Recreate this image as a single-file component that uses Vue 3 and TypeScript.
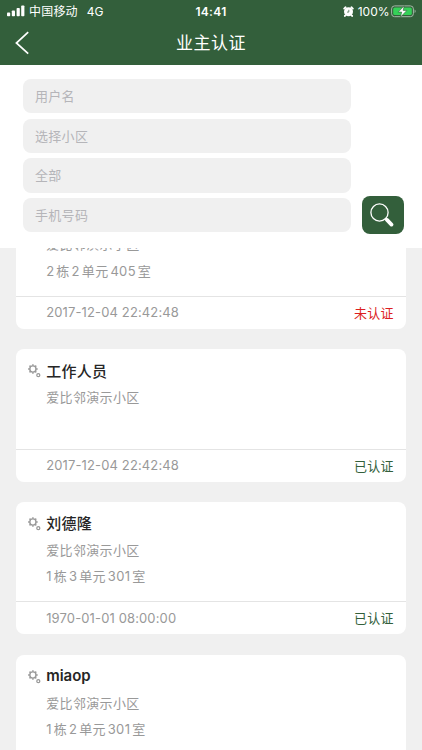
<script setup lang="ts">
interface Owner {
  name: string
  estate: string
  room: string[]
  time?: string
  verified?: boolean
}

const fields: string[] = ['用户名', '选择小区', '全部', '手机号码']

const owners: Owner[] = [
  { name: '', estate: '爱比邻演示小区', room: ['2', '栋', '2', '单元', '405', '室'], time: '2017-12-04 22:42:48', verified: false },
  { name: '工作人员', estate: '爱比邻演示小区', room: [], time: '2017-12-04 22:42:48', verified: true },
  { name: '刘德隆', estate: '爱比邻演示小区', room: ['1', '栋', '3', '单元', '301', '室'], time: '1970-01-01 08:00:00', verified: true },
  { name: 'miaop', estate: '爱比邻演示小区', room: ['1', '栋', '2', '单元', '301', '室'] },
]

const isLatin = (text: string): boolean => /^[\x20-\x7e]+$/.test(text)
</script>

<template>
  <div class="screen">
    <header class="header">
      <div class="status">
        <div class="side">
          <svg class="signal" width="18" height="12" viewBox="0 0 18 12">
            <rect x="0" y="7.6" width="3.2" height="3.6" rx=".8" />
            <rect x="4.8" y="5.4" width="3.2" height="5.8" rx=".8" />
            <rect x="9.6" y="3" width="3.2" height="8.2" rx=".8" />
            <rect x="14.2" y="0.4" width="3.2" height="10.8" rx=".8" />
          </svg>
          <span class="carrier">中国移动</span>
          <span class="net">4G</span>
        </div>
        <div class="clock">14:41</div>
        <div class="side end">
          <svg class="alarm" width="11" height="11" viewBox="0 0 11 11">
            <circle cx="5.5" cy="5.8" r="4.5" fill="#fff" />
            <path d="M1.2 2.6 2.6 1.3M9.8 2.6 8.4 1.3M2.2 9.5l-.3.4M8.8 9.5l.3.4" stroke="#fff" stroke-width="1.9" stroke-linecap="round" />
            <path d="M5.8 3.8v2.3H4" fill="none" stroke="#335f3b" stroke-width=".7" />
          </svg>
          <span class="percent">100%</span>
          <svg class="battery" width="26" height="13" viewBox="0 0 26 13">
            <rect x=".6" y=".9" width="21.8" height="10.8" rx="3" fill="none" stroke="#a5b9a8" stroke-width="1" />
            <rect x="2.2" y="2.5" width="18.6" height="7.6" rx="1.6" fill="#35d158" />
            <path d="M23.6 4.6c1.4.5 1.4 2.9 0 3.4z" fill="#a5b9a8" />
            <path d="M13.2.8 7.2 7.1h3.5l-1.2 5L15.9 5.4h-3.7z" fill="#fff" stroke="#335f3b" stroke-width=".6" />
          </svg>
        </div>
      </div>
      <div class="nav">
        <svg class="back" width="15" height="24" viewBox="0 0 15 24">
          <path d="M13.2 1.2 1.4 12l11.8 10.6" fill="none" stroke="#fff" stroke-width="1.7" />
        </svg>
        <h1 class="title">业主认证</h1>
      </div>
    </header>

    <section class="search">
      <div class="fields">
        <div v-for="field in fields" :key="field" class="field">{{ field }}</div>
      </div>
      <button class="go" type="button" aria-label="搜索">
        <svg width="24" height="24" viewBox="0 0 24 24">
          <circle cx="9.5" cy="9.5" r="8.6" fill="none" stroke="#fff" stroke-width="1.3" />
          <path d="m15.6 15.5 1.5 1.5" stroke="#fff" stroke-width="2" />
          <path d="m17 16.9 4.5 4.7" stroke="#fff" stroke-width="3.7" stroke-linecap="round" />
        </svg>
      </button>
    </section>

    <main class="list">
      <article v-for="(owner, i) in owners" :key="i" class="card">
        <div class="info">
          <div class="name">
            <svg class="gears" width="13" height="14" viewBox="0 0 13 14">
              <g fill="none" stroke="#999">
                <circle cx="4.9" cy="5" r="3.1" stroke-width="1.4" />
                <path d="M4.9 .2v1.6M4.9 8.2v1.6M.1 5h1.6M8.1 5h1.6M1.5 1.6l1.2 1.2M7.1 7.2l1.2 1.2M8.3 1.6 7.1 2.8M2.7 7.2 1.5 8.4" stroke-width="1.5" />
                <circle cx="10.3" cy="11.2" r="1.5" stroke-width="1.3" />
              </g>
            </svg>
            <span :class="{ latin: isLatin(owner.name) }">{{ owner.name }}</span>
          </div>
          <div class="line">{{ owner.estate }}</div>
          <div class="line room">
            <span v-for="(part, k) in owner.room" :key="k">{{ part }}</span>
          </div>
        </div>
        <footer v-if="owner.time" class="foot">
          <time class="time">{{ owner.time }}</time>
          <span class="state" :class="{ pending: !owner.verified }">{{ owner.verified ? '已认证' : '未认证' }}</span>
        </footer>
      </article>
    </main>
  </div>
</template>

<style>
body {
  overflow: hidden;
}
</style>

<style scoped>
.screen {
  display: flex;
  flex-direction: column;
  width: 422px;
  height: 750px;
  overflow: hidden;
  background: #f0f0f0;
  font-family: Inter, "Noto Sans CJK SC", sans-serif;
}
.header {
  flex: none;
  height: 65px;
  background: #335f3b;
  color: #fff;
}
.status {
  display: grid;
  grid-template-columns: 1fr auto 1fr;
  height: 22px;
  padding: 0 5px 0 7px;
  font-size: 12px;
  line-height: 23px;
}
.side {
  display: flex;
  align-items: center;
  height: 22px;
}
.end {
  justify-content: flex-end;
}
.signal {
  fill: #fff;
  margin-right: 4px;
}
.carrier {
  letter-spacing: 0.2px;
}
.net {
  margin-left: 9px;
}
.clock {
  font-weight: 600;
  letter-spacing: 0.3px;
  transform: translateX(-1px);
}
.alarm {
  margin-right: 4px;
}
.percent {
  margin-right: 1.5px;
}
.nav {
  display: grid;
  grid-template-columns: 1fr auto 1fr;
  align-items: center;
  height: 42px;
  padding: 0 15px;
}
.title {
  margin: 0;
  font-size: 17px;
  font-weight: 400;
  line-height: 42px;
  letter-spacing: 0.5px;
}
.search {
  position: relative;
  z-index: 1;
  flex: none;
  box-sizing: border-box;
  display: flex;
  align-items: flex-end;
  gap: 10.5px;
  height: 182.5px;
  padding: 14px 18.5px 13.5px 23px;
  background: #fff;
}
.fields {
  flex: 1;
  display: flex;
  flex-direction: column;
  gap: 5.4px;
  align-self: flex-start;
}
.field {
  height: 34.3px;
  padding-left: 12px;
  border-radius: 8px;
  background: #f0f0f0;
  color: #b5b5b9;
  font-size: 13px;
  line-height: 34px;
  letter-spacing: 0.3px;
}
.go {
  display: flex;
  align-items: center;
  justify-content: center;
  width: 42px;
  height: 38px;
  padding: 0 1px 0 0;
  border: 0;
  border-radius: 8px;
  background: #335f3b;
}
.list {
  display: flex;
  flex-direction: column;
  gap: 20.3px;
  margin-top: -51.4px;
  padding: 0 15.7px;
}
.card {
  flex: none;
  display: flex;
  flex-direction: column;
  height: 132.6px;
  border-radius: 8px;
  background: #fff;
}
.info {
  box-sizing: border-box;
  height: 99.5px;
  padding: 7px 12px 0;
}
.name {
  display: flex;
  align-items: center;
  height: 28px;
  color: #262626;
  font-size: 15px;
  font-weight: 500;
  letter-spacing: 0.3px;
}
.latin {
  font-weight: 600;
  letter-spacing: 0;
}
.gears {
  margin: 2px 5.5px 0 0;
}
.line {
  height: 26.5px;
  padding-left: 18.5px;
  color: #999;
  font-size: 13px;
  line-height: 26px;
  letter-spacing: 0.35px;
}
.room {
  display: flex;
  gap: 1.9px;
}
.foot {
  display: flex;
  align-items: center;
  justify-content: space-between;
  flex: 1;
  padding: 0 12.5px 1px 30.5px;
  border-top: 1.5px solid #e4e4e4;
  font-size: 13px;
}
.time {
  color: #999;
  letter-spacing: 0.13px;
}
.state {
  color: #335f3b;
  letter-spacing: 0.3px;
}
.pending {
  color: #dc1f1f;
}
</style>
